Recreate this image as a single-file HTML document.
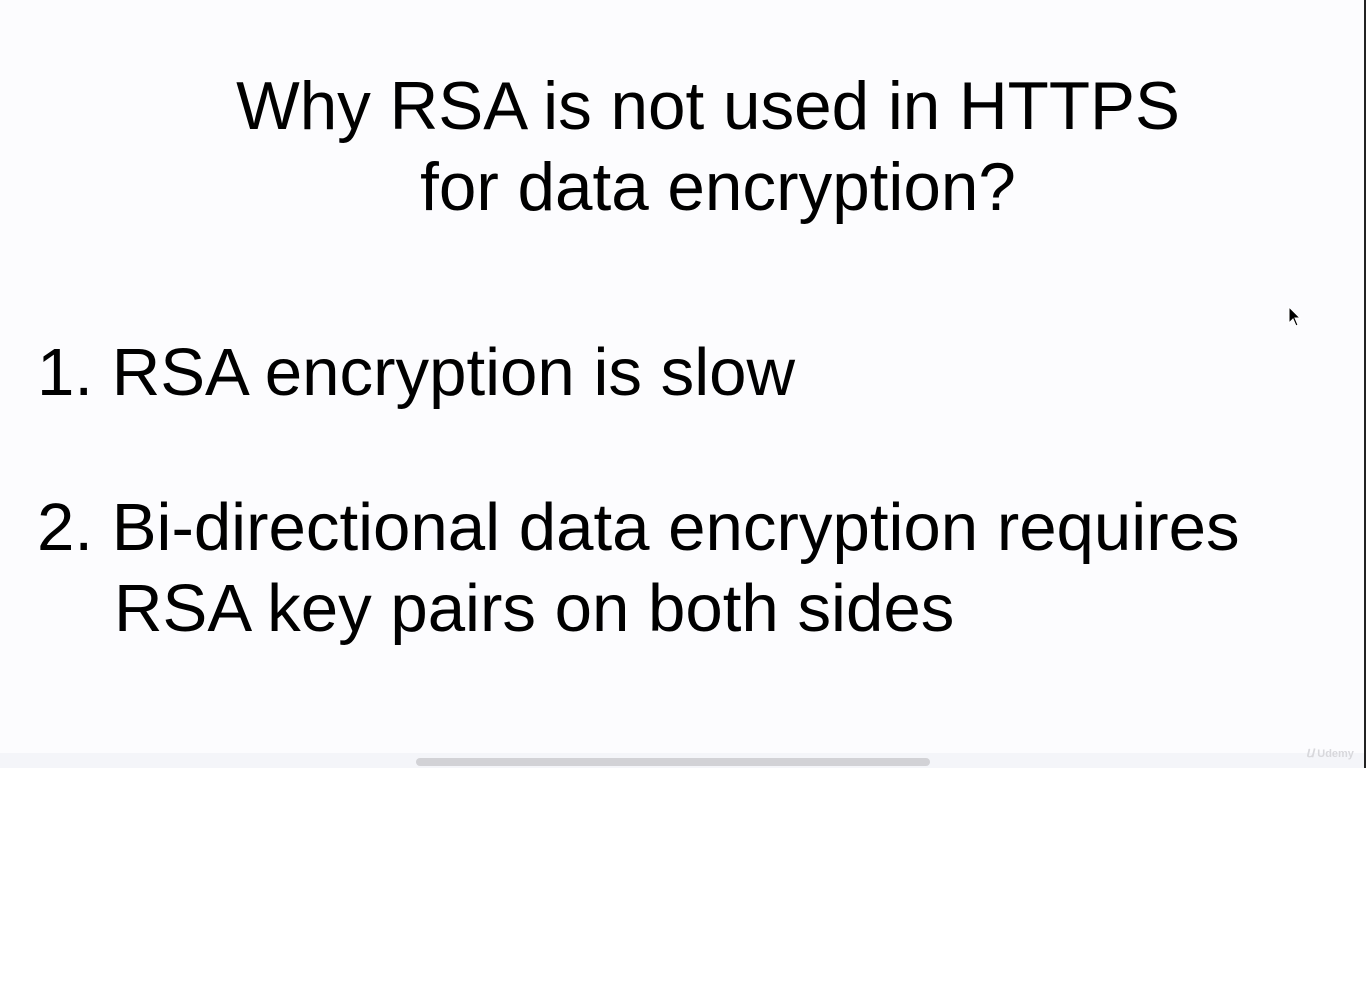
<!DOCTYPE html>
<html><head><meta charset="utf-8"><style>
html,body{margin:0;padding:0;width:1366px;height:1008px;background:#fff;overflow:hidden}
.slide{position:absolute;left:0;top:0;width:1364px;height:768px;background:#fcfcfe}
.edge{position:absolute;left:1364px;top:0;width:2px;height:768px;background:#222}
.strip{position:absolute;left:0;top:753px;width:1364px;height:15px;background:#f4f5f9}
.bar{position:absolute;left:416px;top:758px;width:514px;height:8px;border-radius:4px;background:#d2d2d6}
.t{position:absolute;font-family:"Liberation Sans",Arial,sans-serif;color:#000;white-space:nowrap;line-height:1}
.title{font-size:67.4px;left:-2px;width:1420px;text-align:center}
.it{font-size:67.2px}
.logo{position:absolute;left:1306px;top:744px;font-family:"Liberation Sans",sans-serif;font-size:11px;color:#d8d8dc;font-weight:bold}
</style></head><body>
<div class="slide"></div>
<div class="edge"></div>
<div class="strip"></div>
<div class="bar"></div>
<div class="t title" style="top:73px">Why RSA is not used in HTTPS</div>
<div class="t title" style="top:154px;left:8px">for data encryption?</div>
<div class="t it" style="left:37px;top:339px">1. RSA encryption is slow</div>
<div class="t it" style="left:37px;top:494px">2. Bi-directional data encryption requires</div>
<div class="t it" style="left:114px;top:575px">RSA key pairs on both sides</div>
<svg style="position:absolute;left:1288px;top:306px" width="14" height="22" viewBox="0 0 14 22"><path d="M1 1 L1 17 L5 13 L8 20 L10 19 L7 12 L12 12 Z" fill="#000" stroke="#fff" stroke-width="1"/></svg>
<div class="logo"><span style="font-style:italic;font-size:15px">ᥙ</span> Udemy</div>
</body></html>
